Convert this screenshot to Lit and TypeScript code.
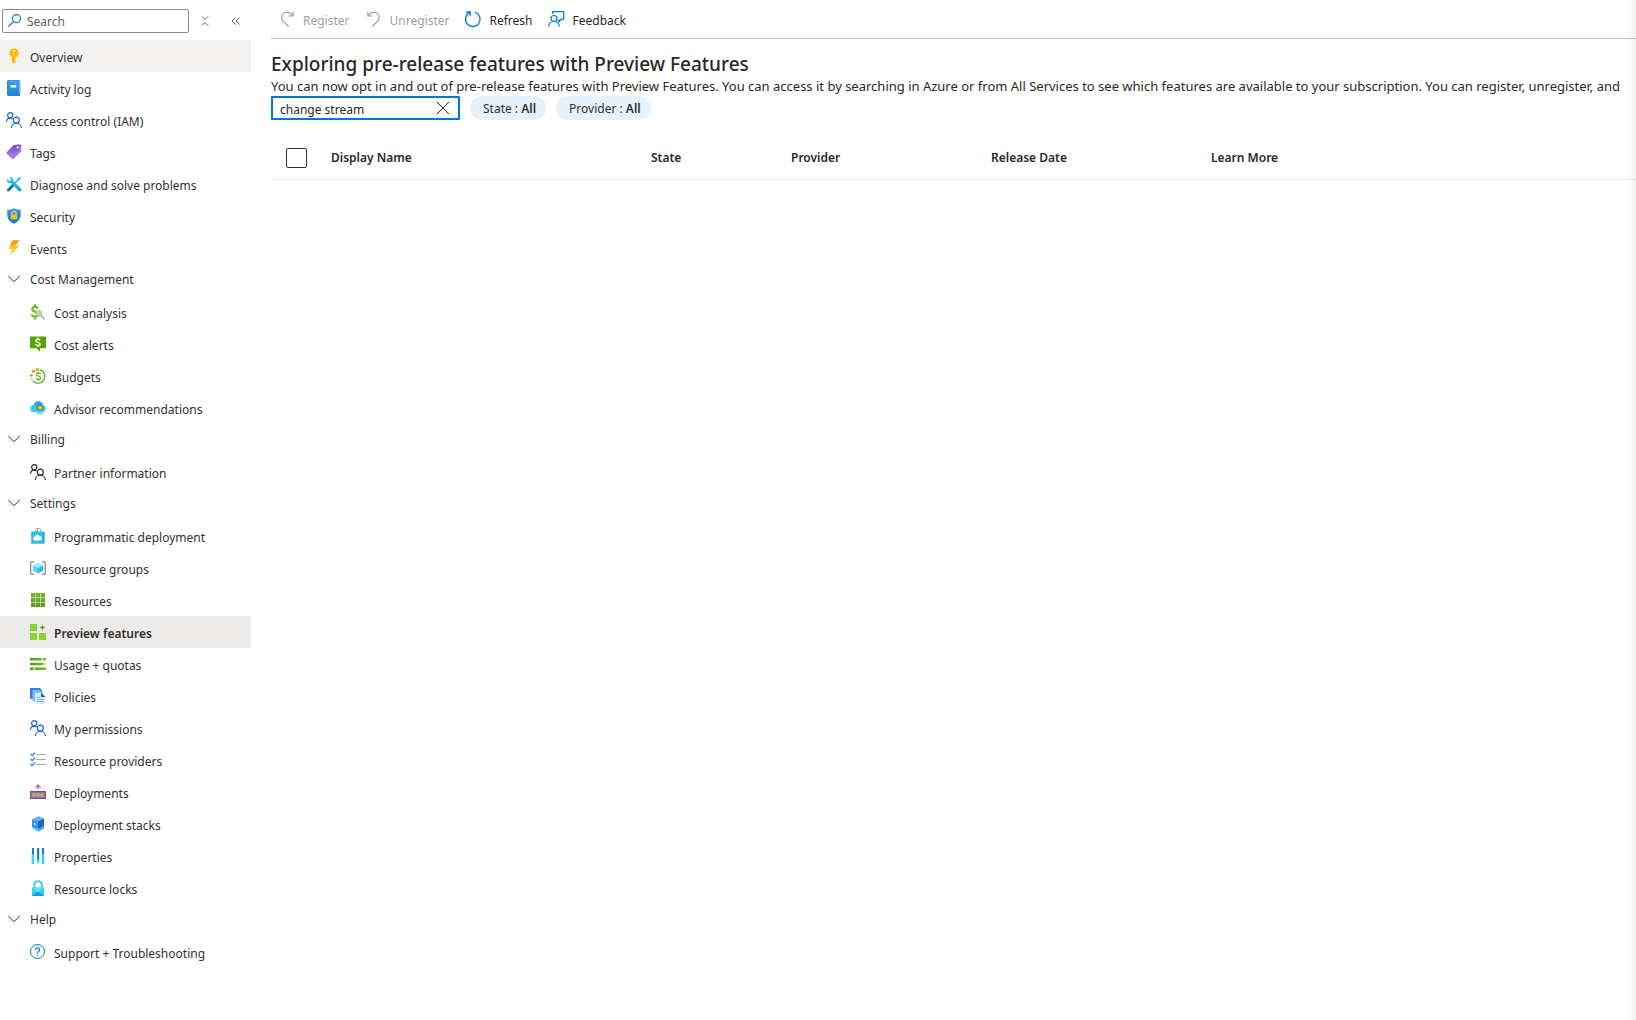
import { LitElement, html, css, TemplateResult } from "lit";
import { customElement, state } from "lit/decorators.js";
import { classMap } from "lit/directives/class-map.js";

const people = html`<svg class="icon" viewBox="0 0 16 16" fill="none" stroke="currentColor" stroke-width="1.2" aria-hidden="true">
  <circle cx="4.2" cy="3.3" r="2.6"/><path d="M.6 9.8C.6 7.6 2.2 6.1 4.2 6.1c1 0 1.9.4 2.5 1"/>
  <circle cx="10.3" cy="8.2" r="3"/><path d="M5.4 16c0-2.7 2.1-4.8 4.9-4.8s5 2.1 5 4.8"/></svg>`;

const icons: Record<string, TemplateResult> = {
  key: html`<svg class="icon" viewBox="0 0 16 16" aria-hidden="true">
    <defs><linearGradient id="gKey" x2="0" y2="1"><stop stop-color="#ffb300"/><stop offset="1" stop-color="#ffc62b"/></linearGradient></defs>
    <path fill="url(#gKey)" d="M8 .4a4.8 4.8 0 0 0-4.8 4.6c0 1.700 1 3.100 2.700 4v5.200L7.800 16l2.300-2.200-1.300-1.300 1.300-1.200-1.200-1.200 1.200-1.100c1.700-.9 2.700-2.300 2.700-4A4.800 4.800 0 0 0 8 .4z"/>
    <circle cx="8" cy="2.8" r="1.1" fill="#fff6d0"/><path fill="#f09a00" d="M6.7 9h.8v5.200l-.8-.7z"/></svg>`,
  log: html`<svg class="icon" viewBox="0 0 16 16" aria-hidden="true">
    <defs><linearGradient id="gLog" x2="0" y2="1"><stop stop-color="#32a0e6"/><stop offset="1" stop-color="#1b86d8"/></linearGradient></defs>
    <path fill="#0f68b5" d="M1.200 1.500C1.200.8 1.800.2 2.500.2H14v15.500H2.500a1.300 1.300 0 0 1-1.300-1.300z"/>
    <path fill="#9dd3f7" d="M3 .9h11.800v13H3z"/><path fill="url(#gLog)" d="M2 1.300h11.400v14.400H3a1 1 0 0 1-1-1z"/><path fill="#fff" d="M4.500 5.200h5.800v2.300H4.500z"/></svg>`,
  people,
  tag: html`<svg class="icon" viewBox="0 0 16 16" aria-hidden="true">
    <defs><linearGradient id="gTag" x2="0" y2="1"><stop stop-color="#7a3fd0"/><stop offset="1" stop-color="#b596e6"/></linearGradient></defs>
    <path fill="#6a32b8" d="M8.200 1.200 13.700.4l1.500 1.200v5.100L8.200 14z"/>
    <path fill="url(#gTag)" d="m.9 7.900 6.900-6.800 4.600-.4 1.500 1.400-.3 5.400-7 8L.9 9.800a1.300 1.300 0 0 1 0-1.900z"/>
    <path fill="#a37bdb" d="m7 15.300 8-7.800V2.300l-1.500-.4-.4 4.700-6.900 7z"/><circle cx="11.600" cy="3.300" r="1.100" fill="#fff"/></svg>`,
  tools: html`<svg class="icon" viewBox="0 0 16 16" aria-hidden="true">
    <defs><linearGradient id="gTool" x2="0" y2="1"><stop stop-color="#32d4f5"/><stop offset="1" stop-color="#1490df"/></linearGradient></defs>
    <path fill="#32c5ee" d="m13.800.7 1.300 1.200-2.300 3-1 .3-3 3-1.100-1.100 3-3 .3-1.100z"/>
    <path fill="#0f6cb8" d="m6.800 7.500 1.900 1.900-5.300 5.600c-.6.600-1.500.5-2.100 0-.6-.6-.6-1.500 0-2.100z"/>
    <path fill="url(#gTool)" d="M3.200.9c1.900-.5 3.900.8 4 2.900l-.1.900 8 8.100c.6.700.6 1.600 0 2.200s-1.600.7-2.300 0L5 7.100C3 7.500 1 6.200.8 4.200c0-.5 0-1 .2-1.400l2.100 2.100 1.600-.3.4-1.700z"/></svg>`,
  shield: html`<svg class="icon" viewBox="0 0 16 16" aria-hidden="true">
    <defs><linearGradient id="gSh" x2="0" y2="1"><stop stop-color="#3b9be8"/><stop offset="1" stop-color="#0f78d8"/></linearGradient></defs>
    <path fill="url(#gSh)" d="M8 .2c2.100 1.400 4.300 1.500 6.700 1.500v5.800c0 3.700-3.300 6.600-6.700 8.300C4.600 14.100 1.300 11.200 1.300 7.500V1.700C3.700 1.700 5.900 1.600 8 .2z"/>
    <path fill="none" stroke="#ffd24d" stroke-width="1.2" d="M5.900 7V5.400a2.100 2.100 0 0 1 4.200 0V7"/><rect x="4.7" y="6.5" width="6.6" height="4.8" rx=".6" fill="#ffb900"/><circle cx="8" cy="8.8" r=".8" fill="#fff2c0"/></svg>`,
  bolt: html`<svg class="icon" viewBox="0 0 16 16" aria-hidden="true">
    <defs><linearGradient id="gBolt" x2="0" y2="1"><stop stop-color="#f98b1e"/><stop offset=".5" stop-color="#fcc81c"/><stop offset="1" stop-color="#fdd21c"/></linearGradient></defs>
    <path fill="url(#gBolt)" d="M6.300.2h7.200L9.200 5.700h4L3.500 15.800l2.900-6.900H2.800z"/></svg>`,
  cost: html`<svg class="icon" viewBox="0 0 16 16" aria-hidden="true">
    <path fill="none" stroke="#6cc01c" stroke-width="2.2" d="M8 4.600C7.400 3.400 6.200 2.900 4.900 2.900 3.200 2.900 2.300 3.700 2.300 5.200c0 3.200 5.600 1.900 5.600 5 0 1.600-1.300 2.400-3.100 2.400-1.600 0-2.700-.6-3.300-1.800"/>
    <path fill="#6cc01c" d="M4 .3h2v2H4zM4 13h2v2.500H4z"/>
    <circle cx="8.8" cy="9.4" r="2.9" fill="#b6e78a" stroke="#b0b0b0"/><path stroke="#a6a6a6" stroke-width="1.6" d="m11 11.600 3.600 3.600"/></svg>`,
  alert: html`<svg class="icon" viewBox="0 0 16 16" aria-hidden="true">
    <path fill="#57a300" d="M.8.5h14.400c.4 0 .8.4.8.8v10.200c0 .4-.4.8-.8.8H10v3.500l-3.400-3.500H.8a.8.8 0 0 1-.8-.8V1.300C0 .9.400.5.8.5z"/>
    <path fill="none" stroke="#fff" stroke-width="1.4" d="M10.200 4.300C9.800 3.600 9 3.200 8 3.200c-1.200 0-2.100.6-2.100 1.500 0 2.200 4.300 1.200 4.300 3.200 0 1-.9 1.600-2.200 1.600-1.100 0-2-.4-2.400-1.200M8 1.700v1.600M8 9.400V11"/></svg>`,
  budget: html`<svg class="icon" viewBox="0 0 16 16" aria-hidden="true">
    <path fill="none" stroke="#4f9a10" stroke-width="1.1" d="M9.800 1.900a6.800 6.800 0 1 1-6.900 11"/>
    <path fill="none" stroke="#6cc01c" stroke-width="1.4" d="M10.500 6.100C10.100 5.400 9.400 5 8.400 5c-1.200 0-2 .6-2 1.500 0 2.100 4.200 1.200 4.200 3.200 0 1-.9 1.600-2.200 1.600-1.100 0-1.900-.4-2.300-1.200M8.400 3.500v1.600M8.400 11.200v1.700"/>
    <g fill="#f5871f"><circle cx="7.3" cy="1.5" r="1.5"/><circle cx="3.4" cy="3.2" r="1.5"/><circle cx="1.3" cy="7.3" r="1.4"/></g><circle cx="1.9" cy="10.9" r=".7" fill="#4f9a10"/></svg>`,
  advisor: html`<svg class="icon" viewBox="0 0 16 16" aria-hidden="true">
    <defs><linearGradient id="gAdv" x2="0" y2="1"><stop stop-color="#1b93eb"/><stop offset=".6" stop-color="#36c9f3"/></linearGradient></defs>
    <path fill="url(#gAdv)" d="M3.700 12.300A3.600 3.600 0 0 1 .3 8.700c0-1.900 1.400-3.300 3.200-3.500C4.100 2.800 6 1.200 8.300 1.200c2.700 0 4.800 1.800 5 4.400 1.500.3 2.500 1.600 2.500 3.200 0 1.900-1.500 3.500-3.500 3.500z"/>
    <path fill="#56e0dc" d="M7.400 10.500h5V15l-2.500-1.300L7.400 15z"/><circle cx="9.9" cy="7.8" r="2.7" fill="#ffca00" stroke="#225086" stroke-width=".9"/></svg>`,
  bag: html`<svg class="icon" viewBox="0 0 16 16" aria-hidden="true">
    <path fill="none" stroke="#949494" d="M5.200 4V2.300c0-1 .7-1.700 1.600-1.700h2.500c.9 0 1.600.7 1.600 1.700V4M7.400 4V1"/>
    <path fill="#1b9fc9" d="m12.300 3.600 2.300.5v11.200l-2.300.5z"/><path fill="#32bedd" d="M1.200 3.600h11.600v12.200H2a.8.8 0 0 1-.8-.8z"/>
    <path fill="#fff" d="M5.200 12.500a2 2 0 0 1-.2-4A2.500 2.500 0 0 1 9.600 8a2.300 2.300 0 0 1 .6 4.500z"/></svg>`,
  group: html`<svg class="icon" viewBox="0 0 16 16" aria-hidden="true">
    <path fill="none" stroke="#949494" stroke-width="1.4" d="M4 1.700H1.900c-.7 0-1.200.3-1.200.9v10.800c0 .6.5.9 1.200.9H4M12 1.700h2.100c.7 0 1.200.3 1.200.9v10.800c0 .6-.5.9-1.200.9H12"/>
    <path fill="#9cebff" d="m8 2.400 5 2.900L8 8 3 5.300z"/><path fill="#50d4f5" d="M3 5.300 8 8v5.600l-5-2.800z"/><path fill="#32b5e8" d="M13 5.300 8 8v5.600l5-2.800z"/></svg>`,
  grid: html`<svg class="icon" viewBox="0 0 16 16" aria-hidden="true">
    <defs><linearGradient id="gGrid" gradientUnits="userSpaceOnUse" x1="0" x2="0" y1="1" y2="15"><stop stop-color="#76bc2d"/><stop offset="1" stop-color="#5e9624"/></linearGradient></defs>
    <path fill="url(#gGrid)" d="M1 1h4.400v4.400H1zM5.900 1h4.300v4.400H5.900zM10.700 1h4.400v4.400h-4.400zM1 5.900h4.400v4.300H1zM5.900 5.900h4.300v4.300H5.900zM10.700 5.900h4.400v4.300h-4.400zM1 10.700h4.400v4.400H1zM5.900 10.700h4.300v4.400H5.900zM10.700 10.700h4.400v4.400h-4.400z"/></svg>`,
  preview: html`<svg class="icon" viewBox="0 0 16 16" aria-hidden="true">
    <path fill="#86d633" d="M0 0h7v7H0zM0 9h7v7H0zM9 9h7v7H9z"/><path fill="#5b9a1c" d="M12.500.2c.3 2 1.100 2.900 3.200 3.300-2.100.4-2.900 1.300-3.200 3.300-.3-2-1.100-2.900-3.200-3.300 2.100-.4 2.900-1.300 3.200-3.300z"/></svg>`,
  usage: html`<svg class="icon" viewBox="0 0 16 16" aria-hidden="true">
    <defs><linearGradient id="gUse"><stop stop-color="#5e9624"/><stop offset="1" stop-color="#76bc2d"/></linearGradient></defs>
    <path fill="#c8e3a8" d="M0 7h16v2H0z"/><path fill="url(#gUse)" d="M0 2h16v2.500H0zM0 6.700h13v2.500H0zM0 11.500h16V14H0z"/>
    <path fill="#d4efb0" d="M11.500 2H13v2.500h-1.500zM3.500 11.500H5V14H3.500z"/></svg>`,
  policy: html`<svg class="icon" viewBox="0 0 16 16" aria-hidden="true">
    <path fill="#2a86d9" d="M0 0h10l2 2.500V11H1a1 1 0 0 1-1-1z"/><path fill="#83b9f9" d="M2.500 2h7l3 3v8.500H3.300a.8.8 0 0 1-.8-.8z"/>
    <path fill="#d5e8fd" d="M5 5h6.200l4.300 4.200v6.600H5.800a.8.8 0 0 1-.8-.8z"/><path fill="#1366c0" d="M11 4.500 15.500 9H11z"/><path stroke="#7db4f2" d="M7 9.500h3M7 11.500h6.500M7 13.500h6.500"/></svg>`,
  checks: html`<svg class="icon" viewBox="0 0 16 16" aria-hidden="true">
    <path stroke="#a6a6a6" stroke-width="1.2" d="M6.500 2.500H16M6.500 7.500H16M6.500 12.500H16"/><path fill="none" stroke="#2a86d9" stroke-width="1.3" d="m.6 2 1.500 1.600L5 .7M.6 7l1.500 1.600L5 5.700M.6 12l1.500 1.600L5 10.700"/></svg>`,
  deploy: html`<svg class="icon" viewBox="0 0 16 16" aria-hidden="true">
    <path fill="none" stroke="#a672b8" stroke-width="1.3" d="M8 5.600V1.200M5.400 3.600 8 1l2.600 2.600"/><path fill="#804998" d="M0 7h16v8H0z"/><path fill="#a672b8" d="M1.200 8.200h13.600v5.600H1.200z"/>
    <path fill="#a4cf30" d="M2.300 9.500h3v3h-3zM6.500 9.500h3v3h-3zM10.700 9.500h3v3h-3z"/></svg>`,
  stacks: html`<svg class="icon" viewBox="0 0 16 16" aria-hidden="true">
    <path fill="#5ad2f7" d="M2.200 10.500 8 13.300l5.800-2.800v1.800L8 15.800l-5.800-3.500z"/><path fill="#1a72c4" d="m8 13.200 5.800-3v2.400L8 15.800z" opacity=".5"/>
    <path fill="#62aef5" d="M2 3.200 8.500.3 14 2.400 7.700 5.500z"/><path fill="#3a8fe6" d="M2 3.200 7.700 5.500v7.700L2 10.700z"/><path fill="#1767bd" d="M14 2.400v7.500l-6.300 3.300V5.500z"/><path fill="#fff" d="m4 6.400 1.400.6v2.200L4 8.600z"/></svg>`,
  sliders: html`<svg class="icon" viewBox="0 0 16 16" aria-hidden="true">
    <path fill="#1f79d2" d="M2 0h2v6H2zM7 0h2.200v12H7zM12 0h2v6h-2z"/>
    <path fill="#45cdf2" d="M1.700 6h2.600v10H1.700zM11.700 6h2.600v10h-2.600zM6.800 11.500h2.600V14L8.100 16l-1.300-2z"/></svg>`,
  lock: html`<svg class="icon" viewBox="0 0 16 16" aria-hidden="true">
    <path fill="none" stroke="#45c8ee" stroke-width="1.9" d="M4.200 8V5A3.800 3.800 0 0 1 8 1.100 3.800 3.800 0 0 1 11.800 5v3"/><path fill="#32d4f5" d="M2 7.500h12v7.700a.7.7 0 0 1-.7.7H2.700a.7.7 0 0 1-.7-.7z"/>
    <path fill="#1b9fd0" d="m2 15.500 6-4.200 6 4.200-.7.4H2.700z"/><path fill="#5fe3fb" d="M2 7.500h12l-6 4.600z"/></svg>`,
  help: html`<svg class="icon" viewBox="0 0 16 16" fill="none" stroke="#0078d4" aria-hidden="true">
    <circle cx="7.5" cy="7.5" r="7"/><path stroke-width="1.2" d="M5.500 5.800c0-1.200.8-2 2-2s2.100.8 2.100 1.900c0 1.600-2.100 1.700-2.100 3.700M7.500 10.700v1.300"/></svg>`,
};

const chevron = html`<svg class="icon" viewBox="0 0 16 16" fill="none" stroke="#323130" aria-hidden="true"><path d="m2.300 5 5.700 5.700L13.700 5"/></svg>`;

interface Item { icon: string; label: string; tone?: string; }
interface Group { title: string; items: Item[]; }

const topItems: Item[] = [
  { icon: "key", label: "Overview" },
  { icon: "log", label: "Activity log" },
  { icon: "people", label: "Access control (IAM)", tone: "blue" },
  { icon: "tag", label: "Tags" },
  { icon: "tools", label: "Diagnose and solve problems" },
  { icon: "shield", label: "Security" },
  { icon: "bolt", label: "Events" },
];

const groups: Group[] = [
  { title: "Cost Management", items: [
    { icon: "cost", label: "Cost analysis" },
    { icon: "alert", label: "Cost alerts" },
    { icon: "budget", label: "Budgets" },
    { icon: "advisor", label: "Advisor recommendations" },
  ] },
  { title: "Billing", items: [{ icon: "people", label: "Partner information" }] },
  { title: "Settings", items: [
    { icon: "bag", label: "Programmatic deployment" },
    { icon: "group", label: "Resource groups" },
    { icon: "grid", label: "Resources" },
    { icon: "preview", label: "Preview features" },
    { icon: "usage", label: "Usage + quotas" },
    { icon: "policy", label: "Policies" },
    { icon: "people", label: "My permissions", tone: "blue" },
    { icon: "checks", label: "Resource providers" },
    { icon: "deploy", label: "Deployments" },
    { icon: "stacks", label: "Deployment stacks" },
    { icon: "sliders", label: "Properties" },
    { icon: "lock", label: "Resource locks" },
  ] },
  { title: "Help", items: [{ icon: "help", label: "Support + Troubleshooting" }] },
];

const base = css`
  * { box-sizing: border-box; }
  button { font: inherit; color: inherit; background: none; border: 0; padding: 0; cursor: pointer; }
  input { font: inherit; color: inherit; }
  .icon { width: 16px; height: 16px; flex: none; display: block; overflow: visible; }
`;

@customElement("side-menu")
export class SideMenu extends LitElement {
  @state() private closed = new Set<string>();

  static styles = [base, css`
    :host { display: block; }
    .tools { display: flex; align-items: center; padding: 9px 0 7px 2px; }
    .search { display: flex; align-items: center; gap: 4px; width: 187px; height: 24px; padding: 0 4px; border: 1px solid #8a8886; border-radius: 2px; }
    .search input { flex: 1; min-width: 0; border: 0; outline: 0; padding: 2px 0 0; background: none; }
    .search input::placeholder { color: #605e5c; opacity: 1; }
    .tool { display: flex; justify-content: center; width: 31px; color: #605e5c; }
    .tool .icon { width: 12px; height: 12px; }
    ul { list-style: none; margin: 0; padding: 0; }
    .row { display: flex; align-items: center; gap: 8px; width: 100%; height: 32px; padding-left: 6px; color: #323130; text-decoration: none; text-align: left; }
    .label { line-height: 20px; padding-top: 4px; white-space: nowrap; }
    .head .label { padding: 0; }
    .head .icon { margin-bottom: 2px; }
    .sub .row { padding-left: 30px; }
    .blue .icon { color: #1a66d6; }
    .hover { background: #f3f2f1; }
    .current { background: #edebe9; font-weight: 600; }
  `];

  private toggle(title: string) {
    const next = new Set(this.closed);
    next.has(title) ? next.delete(title) : next.add(title);
    this.closed = next;
  }

  private row(item: Item) {
    const classes = { row: true, blue: item.tone === "blue", hover: item.label === "Overview", current: item.label === "Preview features" };
    return html`<li><a href="#" class=${classMap(classes)}>${icons[item.icon]}<span class="label">${item.label}</span></a></li>`;
  }

  render() {
    return html`
      <div class="tools">
        <label class="search">
          <svg class="icon" viewBox="0 0 16 16" fill="none" stroke="#0078d4" stroke-width="1.1" aria-hidden="true"><circle cx="9.5" cy="5.6" r="4"/><path d="M6.600 8.500 1.400 13.500"/></svg>
          <input type="search" placeholder="Search" aria-label="Search menu">
        </label>
        <button class="tool" aria-label="Collapse all"><svg class="icon" viewBox="0 0 12 12" fill="none" stroke="currentColor"><path d="M3 1.500 6 4.500l3-3M3 10.500l3-3 3 3"/></svg></button>
        <button class="tool" aria-label="Hide menu"><svg class="icon" viewBox="0 0 12 12" fill="none" stroke="currentColor"><path d="m5.500 2.500-3.500 3.500 3.500 3.500M9.500 2.500 6 6l3.500 3.500"/></svg></button>
      </div>
      <nav aria-label="Subscription">
        <ul>${topItems.map((i) => this.row(i))}</ul>
        ${groups.map((g) => html`
          <button class="row head" aria-expanded=${this.closed.has(g.title) ? "false" : "true"} @click=${() => this.toggle(g.title)}>${chevron}<span class="label">${g.title}</span></button>
          ${this.closed.has(g.title) ? "" : html`<ul class="sub">${g.items.map((i) => this.row(i))}</ul>`}`)}
      </nav>`;
  }
}

@customElement("app-root")
export class AppRoot extends LitElement {
  @state() private query = "change stream";

  static styles = [base, css`
    :host { display: grid; grid-template-columns: 251px minmax(0, 1fr); gap: 20px; min-height: 100vh; background: #fff; color: #292827; font-family: "Segoe UI", "Noto Sans", sans-serif; font-size: 12px; line-height: 20px; overflow: hidden; position: relative; }
    :host::after { content: ""; position: absolute; inset: 0 0 0 auto; width: 10px; background: linear-gradient(to left, rgba(0, 0, 0, .06), transparent); pointer-events: none; }
    .bar { display: flex; gap: 16px; height: 39px; padding: 2px 8px 0; border-bottom: 1px solid #c8c6c4; }
    .bar button { display: flex; align-items: center; gap: 8px; padding-top: 2px; }
    .bar button:disabled { color: #a19f9d; cursor: default; }
    .bar .icon { color: #0078d4; margin-bottom: 4px; }
    .bar button:disabled .icon { color: #a19f9d; }
    h1 { margin: 0; padding-top: 12px; font-size: 19px; line-height: 26px; font-weight: 500; white-space: nowrap; }
    .intro { margin: 0; font-size: 13px; line-height: 19px; white-space: nowrap; overflow: hidden; }
    .filters { display: flex; gap: 10px; }
    .find { display: flex; align-items: center; width: 189px; height: 24px; padding: 0 7px; border: 2px solid #0078d4; border-radius: 1px; }
    .find input { flex: 1; min-width: 0; height: 20px; border: 0; outline: 0; padding: 3px 0 0; background: none; }
    .clear .icon { color: #323130; }
    .pill { height: 24px; padding: 2px 10px 0 13px; border-radius: 12px; background: #e5f1fb; color: #323130; white-space: nowrap; }
    .pill b { font-weight: 600; }
    table { width: 100%; margin-top: 16px; border-collapse: collapse; table-layout: fixed; }
    th { height: 43px; padding: 2px 0 0; border-bottom: 1px solid #edebe9; text-align: left; font-weight: 600; }
    .c-check { width: 60px; } .c-name { width: 320px; } .c-state { width: 140px; } .c-prov { width: 200px; } .c-date { width: 220px; }
    .box { appearance: none; display: block; width: 21px; height: 20px; margin: 0 0 0 15px; border: 1px solid #323130; border-radius: 2px; background: #fff; }
  `];

  render() {
    return html`
      <side-menu></side-menu>
      <main>
        <div class="bar" role="toolbar">
          <button disabled><svg class="icon" viewBox="0 0 16 16" fill="none" stroke="currentColor" stroke-width="1.2" aria-hidden="true"><path d="M14 .5v4.500H9.300M13.600 4.700C12.300 2.500 10.300 1.300 8 1.300c-3.100 0-5.400 2.200-5.400 5 0 1.600.6 2.800 1.600 3.800L9.600 15.500"/></svg>Register</button>
          <button disabled><svg class="icon" viewBox="0 0 16 16" fill="none" stroke="currentColor" stroke-width="1.2" aria-hidden="true"><path d="M1.800.5v4.500h4.700M2.200 4.700C3.500 2.500 5.500 1.300 7.800 1.300c3.100 0 5.400 2.200 5.400 5 0 1.600-.6 2.800-1.600 3.800L6.200 15.500"/></svg>Unregister</button>
          <button><svg class="icon" viewBox="0 0 16 16" fill="none" stroke="currentColor" stroke-width="1.3" aria-hidden="true"><path d="M10.200 1.300a7.300 7.300 0 1 1-5.700.4M1.200 1h4v4.200"/></svg>Refresh</button>
          <button><svg class="icon" viewBox="0 0 16 16" fill="none" stroke="currentColor" stroke-width="1.2" aria-hidden="true"><path d="M4.500 3V.7h11.200v7.500h-2.200l-2.700 2.600V8.200"/><circle cx="6" cy="7.5" r="3"/><path d="M.7 15.700c0-3 2.300-5.200 5.300-5.200s5.300 2.200 5.300 5.200"/></svg>Feedback</button>
        </div>
        <h1>Exploring pre-release features with Preview Features</h1>
        <p class="intro">You can now opt in and out of pre-release features with Preview Features. You can access it by searching in Azure or from All Services to see which features are available to your subscription. You can register, unregister, and</p>
        <div class="filters">
          <div class="find">
            <input type="text" aria-label="Filter features" .value=${this.query} @input=${(e: Event) => (this.query = (e.target as HTMLInputElement).value)}>
            <button class="clear" aria-label="Clear" @click=${() => (this.query = "")}><svg class="icon" viewBox="0 0 16 16" fill="none" stroke="currentColor"><path d="m2 2 12 12M14 2 2 14"/></svg></button>
          </div>
          <button class="pill">State : <b>All</b></button>
          <button class="pill">Provider : <b>All</b></button>
        </div>
        <table>
          <thead><tr>
            <th class="c-check"><input class="box" type="checkbox" aria-label="Select all"></th>
            <th class="c-name">Display Name</th><th class="c-state">State</th><th class="c-prov">Provider</th><th class="c-date">Release Date</th><th>Learn More</th>
          </tr></thead>
        </table>
      </main>`;
  }
}
